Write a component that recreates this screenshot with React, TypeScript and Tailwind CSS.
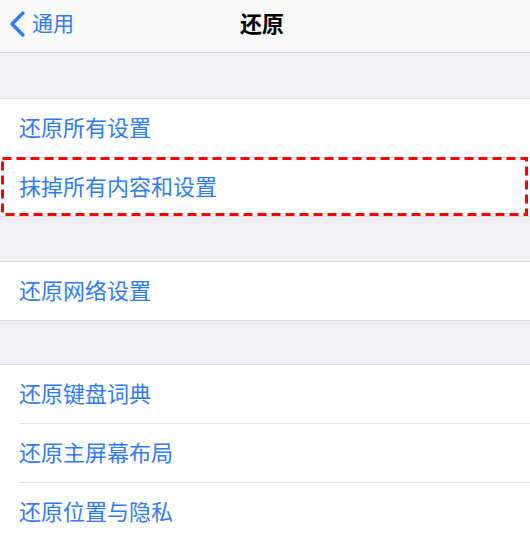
const groups: { pad: string; items: string[] }[] = [
  { pad: "pt-[45px]", items: ["还原所有设置", "抹掉所有内容和设置"] },
  { pad: "pt-[44px]", items: ["还原网络设置"] },
  { pad: "pt-[43px]", items: ["还原键盘词典", "还原主屏幕布局", "还原位置与隐私"] },
];

const highlighted = "抹掉所有内容和设置";

function Row({ label, last }: { label: string; last: boolean }) {
  return (
    <div className="relative bg-white pl-[19px]">
      <div
        className={`flex items-center pb-[3px] text-[22px] text-[#2f7bf5] ${
          last ? "h-[58px]" : "h-[59px] border-b border-[#e2e2e6]"
        }`}
      >
        {label}
      </div>
      {label === highlighted && (
        <svg className="absolute left-0 top-[-1px] h-[60px] w-[530px]" viewBox="0 0 530 60">
          <rect
            x="2.5"
            y="1.5"
            width="524"
            height="56"
            fill="none"
            stroke="#ff0000"
            strokeWidth="3"
            strokeDasharray="9 5"
          />
        </svg>
      )}
    </div>
  );
}

export default function App() {
  return (
    <div
      className="h-[533px] w-[530px] overflow-hidden bg-[#efeff4]"
      style={{ fontFamily: '"Noto Sans CJK SC", "Noto Sans", sans-serif' }}
    >
      {/* Nav bar */}
      <div className="relative flex h-[53px] items-center border-b border-[#d6d6da] bg-[#f9f9f9] pb-[5px]">
        <div className="flex items-center pl-[8px] text-[#2f7bf5]">
          <svg className="h-[28px] w-[20px]" viewBox="0 0 20 28" fill="none">
            <path d="M15 3 L4 14 L15 25" stroke="currentColor" strokeWidth="3.4" strokeLinecap="round" strokeLinejoin="round" />
          </svg>
          <span className="ml-[4px] pb-[2px] text-[21px] leading-none">通用</span>
        </div>
        <div className="absolute inset-x-0 top-0 flex h-full items-center justify-center pb-[8px] pr-[6px] text-[22px] font-semibold text-black">
          还原
        </div>
      </div>

      {groups.map((g, gi) => (
        <div key={gi} className={g.pad}>
          <div className="border-y border-[#dcdce0] bg-white">
            {g.items.map((label, i) => (
              <Row key={label} label={label} last={i === g.items.length - 1} />
            ))}
          </div>
        </div>
      ))}
    </div>
  );
}
